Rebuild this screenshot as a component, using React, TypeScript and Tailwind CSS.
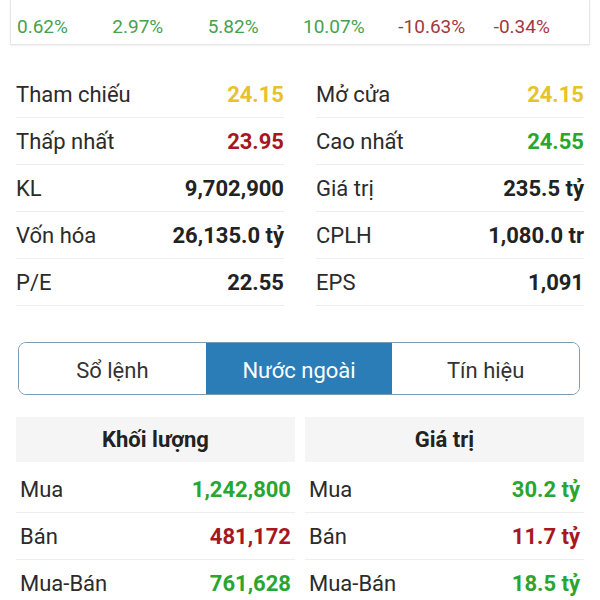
import React from 'react';

const percents = [
  { v: '0.62%', c: 'text-[#45a24f]' },
  { v: '2.97%', c: 'text-[#45a24f]' },
  { v: '5.82%', c: 'text-[#45a24f]' },
  { v: '10.07%', c: 'text-[#45a24f]' },
  { v: '-10.63%', c: 'text-[#a3383c]' },
  { v: '-0.34%', c: 'text-[#a3383c]' },
];

const leftStats = [
  { label: 'Tham chiếu', value: '24.15', color: 'text-[#e6c22c]' },
  { label: 'Thấp nhất', value: '23.95', color: 'text-[#a8171f]' },
  { label: 'KL', value: '9,702,900', color: 'text-[#222]' },
  { label: 'Vốn hóa', value: '26,135.0 tỷ', color: 'text-[#222]' },
  { label: 'P/E', value: '22.55', color: 'text-[#222]' },
];

const rightStats = [
  { label: 'Mở cửa', value: '24.15', color: 'text-[#e6c22c]' },
  { label: 'Cao nhất', value: '24.55', color: 'text-[#2aa52f]' },
  { label: 'Giá trị', value: '235.5 tỷ', color: 'text-[#222]' },
  { label: 'CPLH', value: '1,080.0 tr', color: 'text-[#222]' },
  { label: 'EPS', value: '1,091', color: 'text-[#222]' },
];

const volume = [
  { label: 'Mua', value: '1,242,800', color: 'text-[#2aa52f]' },
  { label: 'Bán', value: '481,172', color: 'text-[#a8171f]' },
  { label: 'Mua-Bán', value: '761,628', color: 'text-[#2aa52f]' },
];

const amount = [
  { label: 'Mua', value: '30.2 tỷ', color: 'text-[#2aa52f]' },
  { label: 'Bán', value: '11.7 tỷ', color: 'text-[#a8171f]' },
  { label: 'Mua-Bán', value: '18.5 tỷ', color: 'text-[#2aa52f]' },
];

type Row = { label: string; value: string; color: string };

const StatColumn: React.FC<{ rows: Row[]; pad?: string }> = ({ rows, pad = '' }) => (
  <div className="flex-1 flex flex-col">
    {rows.map((r) => (
      <div
        key={r.label}
        className={`h-[47px] flex items-center justify-between border-b border-[#eeeeee] ${pad}`}
      >
        <span className="text-[#2b2b2b]">{r.label}</span>
        <span className={`font-bold ${r.color}`}>{r.value}</span>
      </div>
    ))}
  </div>
);

const tabs = ['Sổ lệnh', 'Nước ngoài', 'Tín hiệu'];

export default function App() {
  return (
    <div
      className="w-[600px] h-[600px] overflow-hidden bg-white text-[22px]"
      style={{ fontFamily: 'Roboto, "Noto Sans", sans-serif' }}
    >
      {/* Percent strip */}
      <div className="mx-[10px] h-[45px] flex items-center pt-[10px] pl-[6px] border-x border-b border-[#e6e6e6] shadow-[0_1px_2px_rgba(0,0,0,0.06)]">
        {percents.map((p) => (
          <span key={p.v} className={`w-[97px] text-[19px] ${p.c}`}>
            {p.v}
          </span>
        ))}
      </div>

      {/* Stats */}
      <div className="mt-[26px] px-4 flex gap-8">
        <StatColumn rows={leftStats} />
        <StatColumn rows={rightStats} />
      </div>

      {/* Tabs */}
      <div className="mt-[36px] ml-[18px] mr-[20px] h-[53px] flex border border-[#7c9bb0] rounded-[8px] overflow-hidden">
        {tabs.map((t, i) => (
          <div
            key={t}
            className={`flex-1 flex items-center justify-center pt-[3px] ${
              i === 1 ? 'bg-[#2b7db8] text-white' : 'bg-white text-[#333]'
            }`}
          >
            {t}
          </div>
        ))}
      </div>

      {/* Foreign trading */}
      <div className="mt-[22px] px-4 flex gap-[10px]">
        <div className="flex-1 flex flex-col gap-[4px]">
          <div className="h-[45px] bg-[#f5f5f5] flex items-center justify-center font-bold text-[22px] text-[#222]">
            Khối lượng
          </div>
          <StatColumn rows={volume} pad="px-1" />
        </div>
        <div className="flex-1 flex flex-col gap-[4px]">
          <div className="h-[45px] bg-[#f5f5f5] flex items-center justify-center font-bold text-[22px] text-[#222]">
            Giá trị
          </div>
          <StatColumn rows={amount} pad="px-1" />
        </div>
      </div>
    </div>
  );
}
